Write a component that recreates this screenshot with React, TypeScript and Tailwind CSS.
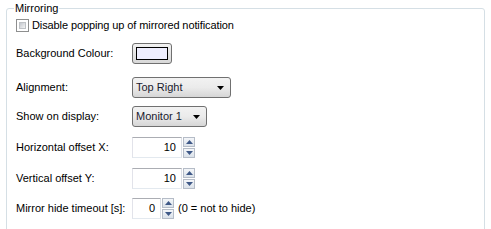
import { ReactNode } from 'react'

const font = { fontFamily: '"Liberation Sans", Arial, sans-serif' }

function Combo({ value, width }: { value: string; width: string }) {
  return (
    <div
      className={`${width} h-[21px] flex items-center justify-between rounded-[3px] border border-[#707070] bg-gradient-to-b from-[#f2f2f2] via-[#ebebeb] to-[#d6d6d6] pl-[3px] pr-[6px] text-[#1a1a2e]`}
    >
      <span>{value}</span>
      <svg width="7" height="4" viewBox="0 0 7 4">
        <path d="M0 0h7L3.5 4z" fill="#000" />
      </svg>
    </div>
  )
}

function Spin({ value, width }: { value: string; width: string }) {
  return (
    <div className="flex items-center h-[21px]">
      <div className={`${width} h-full flex items-center justify-end pr-[5px] border border-[#abadb3] border-l-[#e2e3ea] border-r-[#dbdfe6] border-b-[#e3e9ef] bg-white text-black`}>
        {value}
      </div>
      <div className="flex flex-col gap-[1px] ml-[1px] w-[12px] h-full">
        {[0, 1].map((i) => (
          <div
            key={i}
            className="flex-1 flex items-center justify-center border border-[#b5bcc7] bg-gradient-to-b from-[#f4f6f9] to-[#dbe2ea]"
          >
            <svg width="7" height="4" viewBox="0 0 7 4">
              <path d={i === 0 ? 'M0 4h7L3.5 0z' : 'M0 0h7L3.5 4z'} fill="#3e5887" />
            </svg>
          </div>
        ))}
      </div>
    </div>
  )
}

function Row({ label, mt, children }: { label: string; mt: string; children: ReactNode }) {
  return (
    <div className={`flex items-center h-[21px] ${mt}`}>
      <span className="w-[116px] shrink-0">{label}</span>
      {children}
    </div>
  )
}

export default function App() {
  return (
    <div className="w-[491px] h-[229px] bg-white overflow-hidden text-[11px] leading-[13px] text-black" style={font}>
      <div className="relative mt-[8px] ml-[6px] w-[479px] h-[240px] rounded-[3px] border border-[#d5dfe5] pl-[9px] pt-[10px]">
        <span className="absolute left-[7px] -top-[7px] bg-white px-[1px] leading-[13px]">Mirroring</span>

        <label className="flex items-center gap-[3px] h-[13px] tracking-[-0.1px]">
          <span className="w-[13px] h-[13px] border border-[#8e8f8f] bg-white p-[2px]">
            <span className="block w-full h-full bg-gradient-to-br from-[#c4c8ce] to-[#f4f4f4] border border-[#bfc2c6]" />
          </span>
          Disable popping up of mirrored notification
        </label>

        <Row label="Background Colour:" mt="mt-[11px]">
          <div className="w-[40px] h-[21px] rounded-[3px] border border-[#707070] bg-gradient-to-b from-[#f2f2f2] to-[#d8d8d8] p-[3px]">
            <div className="w-full h-full border border-black bg-[#eeeefe]" />
          </div>
        </Row>

        <Row label="Alignment:" mt="mt-[13px]">
          <Combo value="Top Right" width="w-[99px]" />
        </Row>

        <Row label="Show on display:" mt="mt-[8px]">
          <Combo value="Monitor 1" width="w-[75px]" />
        </Row>

        <Row label="Horizontal offset X:" mt="mt-[10px]">
          <Spin value="10" width="w-[50px]" />
        </Row>

        <Row label="Vertical offset Y:" mt="mt-[10px]">
          <Spin value="10" width="w-[50px]" />
        </Row>

        <Row label="Mirror hide timeout [s]:" mt="mt-[9px]">
          <Spin value="0" width="w-[29px]" />
          <span className="ml-[4px]">(0 = not to hide)</span>
        </Row>
      </div>
    </div>
  )
}
